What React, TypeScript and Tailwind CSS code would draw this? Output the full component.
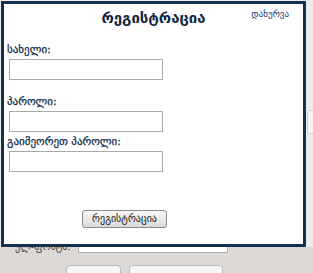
import React from 'react';

const Field = ({ label, gap }: { label: string; gap: string }) => {
    return (
        <div className={gap}>
            <div className="pl-[3px] text-[11px] leading-[13px] text-[#102a47] [-webkit-text-stroke:0.25px_#102a47]">
                {label}
            </div>
            <input
                className="mt-[3px] ml-[5px] block h-[21px] w-[154px] border border-[#a9a9a9] bg-white px-1 text-[11px] outline-none"
                type="text"
            />
        </div>
    );
};

const App = () => {
    return (
        <div className="relative h-[273px] w-[313px] overflow-hidden bg-[#dcd9d7] font-['DejaVu_Sans',sans-serif]">
            {/* page behind the dialog */}
            <div className="h-[247px] bg-[#ececec] pt-[110px]">
                <div className="ml-[307px] h-[24px] w-[10px] rounded-l-[3px] border border-[#d0d0d0] bg-[#f4f4f4]" />
            </div>
            <div className="flex items-end pl-[15px] -mt-[6px]">
                <span className="w-[63px] whitespace-nowrap text-[10px] leading-[12px] text-[#444]">ელ-ფოსტა:</span>
                <div className="h-[6px] w-[150px] border border-t-0 border-[#b0b0b0] bg-white" />
            </div>
            <div className="mt-[12px] flex gap-[8px] pl-[66px]">
                <div className="h-[20px] w-[55px] rounded-[4px] border border-[#b8b8b8] bg-[#f6f6f6]" />
                <div className="h-[20px] w-[94px] rounded-[4px] border border-[#b8b8b8] bg-[#f6f6f6]" />
            </div>

            {/* registration dialog */}
            <div className="absolute left-[1px] top-[1px] h-[246px] w-[305px] border-[3px] border-[#15304f] bg-white">
                <div className="relative h-[22px] pt-[2px] text-center">
                    <span className="text-[15px] font-bold leading-[18px] text-[#0f2742]">რეგისტრაცია</span>
                    <a className="absolute right-[14px] top-[5px] cursor-pointer text-[9px] leading-[10px] text-[#1b3470]">
                        დახურვა
                    </a>
                </div>
                <Field label="სახელი:" gap="mt-[17px]" />
                <Field label="პაროლი:" gap="mt-[15px]" />
                <Field label="გაიმეორეთ პაროლი:" gap="mt-[3px]" />
                <div className="mt-[38px] flex">
                    <button className="ml-[78px] h-[18px] w-[85px] rounded-[3px] border border-[#8a8a8a] bg-gradient-to-b from-[#f8f8f8] to-[#d9d9d9] text-[10px] leading-[14px] text-[#222]">
                        რეგისტრაცია
                    </button>
                </div>
            </div>
        </div>
    );
};

export default App;
